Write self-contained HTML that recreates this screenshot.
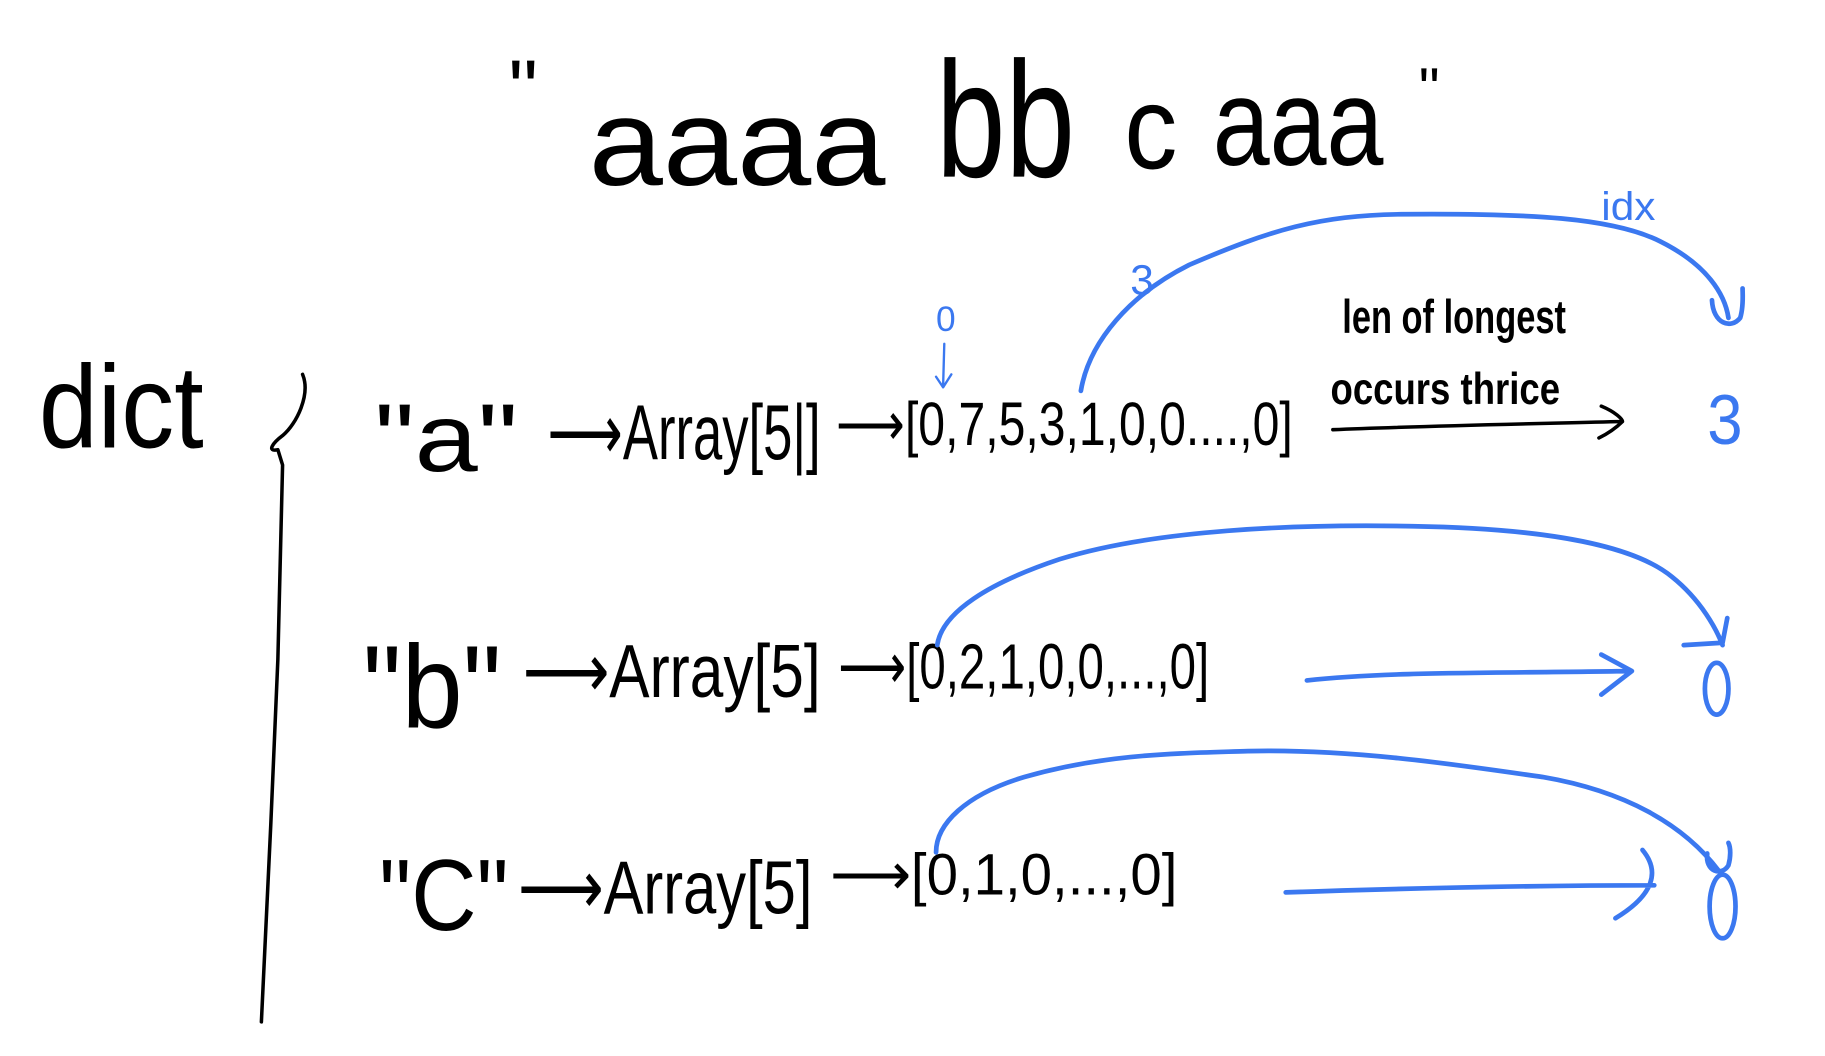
<!DOCTYPE html>
<html><head><meta charset="utf-8"><style>
html,body{margin:0;padding:0;background:#fff;width:1825px;height:1056px;overflow:hidden}
svg{display:block}
text{font-family:"Liberation Sans",sans-serif;fill:#000}
.b{fill:#3b78f0}
.k{fill:none;stroke:#000;stroke-width:3;stroke-linecap:round;stroke-linejoin:round}
.u{fill:none;stroke:#3b78f0;stroke-width:4;stroke-linecap:round;stroke-linejoin:round}
</style></head><body>
<svg width="1825" height="1056" viewBox="0 0 1550 897" preserveAspectRatio="none">
<!-- title -->
<text x="432" y="100" font-size="70" font-weight="300">"</text>
<text x="500" y="157" font-size="105" textLength="252" lengthAdjust="spacingAndGlyphs">aaaa</text>
<text x="795" y="150" font-size="140" textLength="118" lengthAdjust="spacingAndGlyphs">bb</text>
<text x="955" y="143" font-size="100" textLength="45" lengthAdjust="spacingAndGlyphs">c</text>
<text x="1030" y="140" font-size="105" textLength="145" lengthAdjust="spacingAndGlyphs">aaa</text>
<text x="1205" y="92" font-size="50">"</text>
<!-- dict -->
<text x="33" y="380" font-size="100" textLength="140" lengthAdjust="spacingAndGlyphs">dict</text>
<path class="k" d="M257,318 C264,335 252,360 240,370 C232,376 226,384 236,382 L240,395 L236,560 L230,700 L222,868"/>
<!-- row1 -->
<text x="318" y="400" font-size="82" textLength="122" lengthAdjust="spacingAndGlyphs">"a"</text>
<text x="465" y="390" font-size="66" textLength="232" lengthAdjust="spacingAndGlyphs">⟶Array[5|]</text>
<text x="710" y="378" font-size="52" textLength="388" lengthAdjust="spacingAndGlyphs">⟶[0,7,5,3,1,0,0....,0]</text>
<text class="b" x="795" y="281" font-size="30">0</text>
<path class="u" style="stroke-width:2" d="M802,292 L801,328 M795,320 L801,329 L808,318"/>
<path class="u" d="M918,332 C925,290 960,250 1010,225 C1080,195 1120,183 1190,182 C1300,181 1370,185 1410,205 C1450,225 1465,250 1468,270"/>
<path class="u" d="M1454,255 C1455,275 1470,280 1478,270 C1481,260 1480,250 1480,245"/>
<text class="b" x="960" y="250" font-size="36">3</text>
<text class="b" x="1360" y="187" font-size="34" textLength="46" lengthAdjust="spacingAndGlyphs">idx</text>
<text x="1140" y="283" font-size="40" font-weight="bold" textLength="190" lengthAdjust="spacingAndGlyphs">len of longest</text>
<text x="1130" y="343" font-size="38" font-weight="bold" textLength="195" lengthAdjust="spacingAndGlyphs">occurs thrice</text>
<path class="k" d="M1132,365 C1200,362 1300,360 1378,358 M1360,345 C1372,350 1378,356 1378,358 C1372,364 1366,368 1358,372"/>
<text class="b" x="1450" y="377" font-size="60" textLength="30" lengthAdjust="spacingAndGlyphs">3</text>
<!-- row2 -->
<text x="308" y="618" font-size="100" textLength="118" lengthAdjust="spacingAndGlyphs">"b"</text>
<text x="444" y="592" font-size="64" textLength="253" lengthAdjust="spacingAndGlyphs">⟶Array[5]</text>
<text x="712" y="585" font-size="54" textLength="315" lengthAdjust="spacingAndGlyphs">⟶[0,2,1,0,0,...,0]</text>
<path class="u" d="M796,548 C800,520 840,495 900,475 C980,450 1100,445 1200,447 C1320,449 1390,465 1420,490 C1445,510 1458,535 1463,548"/>
<path class="u" d="M1430,548 L1463,546 L1467,525"/>
<path class="u" d="M1110,578 C1180,570 1280,572 1385,570 M1360,556 L1386,570 L1360,590"/>
<ellipse cx="1458" cy="585" rx="10" ry="22" class="u"/>
<!-- row3 -->
<text x="322" y="790" font-size="86" textLength="110" lengthAdjust="spacingAndGlyphs">"C"</text>
<text x="440" y="776" font-size="64" textLength="250" lengthAdjust="spacingAndGlyphs">⟶Array[5]</text>
<text x="705" y="760" font-size="50" textLength="295" lengthAdjust="spacingAndGlyphs">⟶[0,1,0,...,0]</text>
<path class="u" d="M795,724 C795,700 820,675 870,660 C940,640 1000,640 1060,638 C1150,636 1240,650 1310,660 C1380,672 1430,700 1460,740"/>
<path class="u" d="M1450,725 C1448,740 1462,745 1468,735 C1470,728 1470,720 1468,716"/>
<path class="u" d="M1092,758 C1180,755 1300,752 1405,752 M1395,722 C1410,740 1405,760 1372,780"/>
<ellipse cx="1463" cy="770" rx="11" ry="27" class="u"/>
</svg>
</body></html>
